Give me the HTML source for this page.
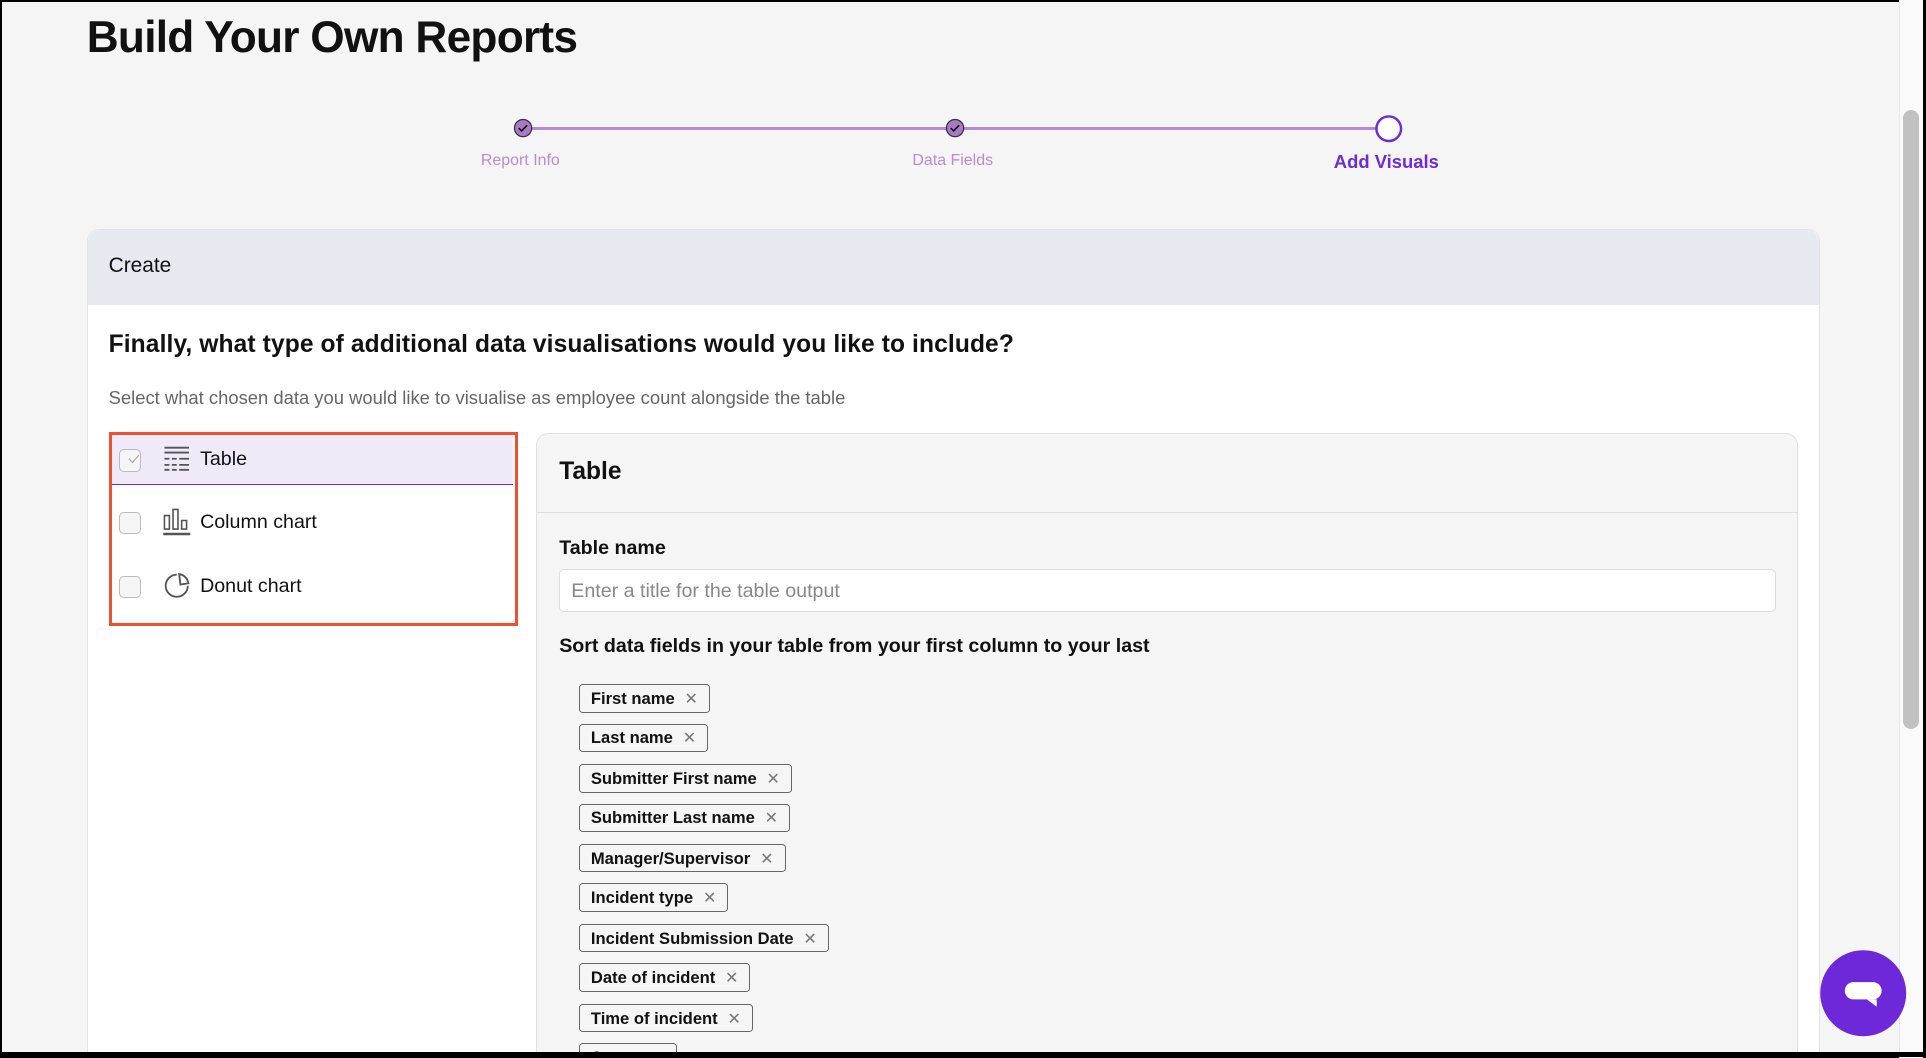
<!DOCTYPE html>
<html><head><meta charset="utf-8"><style>
*{box-sizing:border-box;margin:0;padding:0}
html,body{width:1568px;height:861px;overflow:hidden}
html{zoom:1.22832}
body{background:#f5f5f5;font-family:"Liberation Sans",sans-serif;color:#111;position:relative;border:2px solid #000;border-right:none}
.abs{position:absolute}
h1{position:absolute;left:69px;top:9px;font-size:36px;font-weight:700;letter-spacing:-0.6px}
.lbl{position:absolute;top:122px;font-size:13px;color:#b98bd6;transform:translateX(-50%);white-space:nowrap}
.card{position:absolute;left:69px;top:185px;width:1411px;height:672px;background:#fff;border-radius:10px 10px 0 0;border:1px solid #e3e3e3;overflow:hidden}
.ch{height:61px;background:#e6e9f0;border-radius:10px 10px 0 0;padding:19px 17px;font-size:17px}
.q{position:absolute;left:17px;top:82px;font-size:20px;font-weight:700;letter-spacing:0.1px}
.sub{position:absolute;left:17px;top:128px;font-size:15px;color:#666}
.list{position:absolute;left:17px;top:164px;width:333px;height:158px;border:3px solid #ee5130}
.it{position:absolute;left:0;width:327px;height:41px;font-size:16px}
.it .cb{position:absolute;left:6px;top:12px;width:18px;height:18px;border:1px solid #bbb;border-radius:4px;background:#f5f5f5}
.it .tx{position:absolute;left:72px;top:11px}
.it svg{position:absolute;left:41px;top:8px}
.panel{position:absolute;left:365px;top:165px;width:1027px;height:520px;background:#f5f5f5;border:1px solid #e0e0e0;border-radius:10px}
.ph{height:64px;border-bottom:1px solid #ddd;padding:20px 18px;font-size:20px;font-weight:700}
.pl{position:absolute;left:18px;font-size:16px;font-weight:700}
.inp{position:absolute;left:18px;top:110px;width:991px;height:35px;background:#fff;border:1px solid #ddd;border-radius:4px;padding:8px 9px;font-size:16px;color:#888}
.chip{position:absolute;left:34px;height:23px;border:1px solid #666;border-radius:3px;padding:3px 9px;font-size:13.5px;font-weight:700;white-space:nowrap;background:#f5f5f5}
.chip span{color:#777;font-weight:400;margin-left:8px;font-size:13px}
</style></head><body>
<h1>Build Your Own Reports</h1>
<div class="abs" style="left:424px;top:102px;width:705px;height:2px;background:#b889d8"></div>
<svg class="abs" style="left:415px;top:94px" width="18" height="18"><circle cx="9" cy="9" r="7" fill="#a57cc4" stroke="#3a2a4a" stroke-width="1"/><path d="M5.5 9l2.3 2.3 4.5-4.6" fill="none" stroke="#111" stroke-width="1.3"/></svg>
<svg class="abs" style="left:767px;top:94px" width="18" height="18"><circle cx="9" cy="9" r="7" fill="#a57cc4" stroke="#3a2a4a" stroke-width="1"/><path d="M5.5 9l2.3 2.3 4.5-4.6" fill="none" stroke="#111" stroke-width="1.3"/></svg>
<svg class="abs" style="left:1117px;top:91px" width="24" height="24"><circle cx="12" cy="12" r="10" fill="#fff" stroke="#6d2bd9" stroke-width="2"/></svg>
<div class="lbl" style="left:422px">Report Info</div>
<div class="lbl" style="left:774px">Data Fields</div>
<div class="lbl" style="left:1127px;top:121px;font-size:15px;font-weight:700;color:#6d2bd9">Add Visuals</div>
<div class="card">
<div class="ch">Create</div>
<div class="q">Finally, what type of additional data visualisations would you like to include?</div>
<div class="sub">Select what chosen data you would like to visualise as employee count alongside the table</div>
<div class="list">
<div class="it" style="top:0;background:#efe9f8;border-bottom:1px solid #6d2bd9"><div class="cb"></div><svg width="16" height="16" style="left:10px;top:12px;position:absolute"><path d="M4 8l3 3 5-6" fill="none" stroke="#aaa" stroke-width="1"/></svg>
<svg width="24" height="24"><path d="M2 3h20M2 7h20M2 12h4M8 12h4M14 12h8M2 17h4M8 17h4M14 17h8M2 21h4M8 21h4M14 21h8" stroke="#555" stroke-width="1.5" fill="none"/></svg><div class="tx">Table</div></div>
<div class="it" style="top:51px"><div class="cb"></div><svg width="24" height="24"><path d="M2 7h4v11H2zM9 2h4v16H9zM16 11h4v7h-4z" stroke="#555" stroke-width="1.3" fill="none"/><path d="M1 22h22" stroke="#555" stroke-width="2"/></svg><div class="tx">Column chart</div></div>
<div class="it" style="top:103px"><div class="cb"></div><svg width="24" height="24"><path d="M12 3a9 9 0 1 0 9 9" stroke="#555" stroke-width="1.5" fill="none"/><path d="M14 2.5a9 9 0 0 1 7.5 7.5L15 11z" stroke="#555" stroke-width="1.5" fill="none"/></svg><div class="tx">Donut chart</div></div>
</div>
<div class="panel">
<div class="ph">Table</div>
<div class="pl" style="top:84px">Table name</div>
<div class="inp">Enter a title for the table output</div>
<div class="pl" style="top:164px">Sort data fields in your table from your first column to your last</div>
<div class="chip" style="top:204px">First name<span>✕</span></div>
<div class="chip" style="top:236px">Last name<span>✕</span></div>
<div class="chip" style="top:269px">Submitter First name<span>✕</span></div>
<div class="chip" style="top:301px">Submitter Last name<span>✕</span></div>
<div class="chip" style="top:334px">Manager/Supervisor<span>✕</span></div>
<div class="chip" style="top:366px">Incident type<span>✕</span></div>
<div class="chip" style="top:399px">Incident Submission Date<span>✕</span></div>
<div class="chip" style="top:431px">Date of incident<span>✕</span></div>
<div class="chip" style="top:464px">Time of incident<span>✕</span></div>
<div class="chip" style="top:496px">Status<span>✕</span></div>
</div>
</div>
<div class="abs" style="left:1544px;top:-2px;width:20px;height:863px;background:#fafafa;border-left:1px solid #e6e6e6"></div>
<div class="abs" style="left:1548px;top:88px;width:13px;height:504px;background:#c1c1c1;border-radius:7px"></div>
<div class="abs" style="left:1564px;top:-2px;width:4px;height:863px;background:#000"></div>
<div class="abs" style="left:0;top:855px;width:1568px;height:4px;background:#000"></div>
<svg class="abs" style="left:1479px;top:771px" width="72" height="72"><circle cx="36" cy="36" r="35" fill="#6d28d9"/><rect x="21" y="27" width="30" height="14" rx="7" fill="#fff"/><path d="M39 41h8v6z" fill="#fff"/></svg>
</body></html>
